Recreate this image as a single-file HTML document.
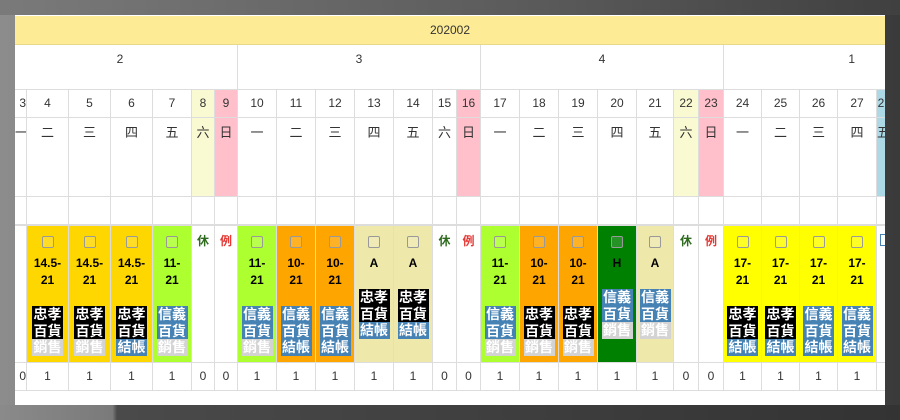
<!DOCTYPE html>
<html><head><meta charset="utf-8">
<style>
*{box-sizing:border-box;margin:0;padding:0}
body{width:900px;height:420px;overflow:hidden;position:relative;background:linear-gradient(90deg,#8c8c8c 0%,#6a6a6a 40%,#3a3a3a 100%);font-family:"Liberation Sans","Noto Sans CJK TC",sans-serif;color:#333}
.bot{position:absolute;left:0;top:405px;width:900px;height:15px;background:linear-gradient(90deg,#8a8a8a,#7a7a7a 12.5%,#4a4a4a 13%,#333 100%)}
.top{position:absolute;left:0;top:0;width:900px;height:15px;background:linear-gradient(90deg,#7a7a7a,#5a5a5a 60%,#404040)}
.wrap{position:absolute;left:15px;top:15px;width:870px;height:390px;background:#fff;overflow:hidden;border-top:1px solid #fff}
.row{display:grid;grid-template-columns:11px 42px 42px 42px 39px 23px 23px 39px 39px 39px 39px 39px 24px 24px 39px 39px 39px 39px 37px 25px 25px 38px 38px 38px 39px 9px}
.row>div{border-left:1px solid #ddd;border-bottom:1px solid #ddd;text-align:center;font-size:12px;overflow:hidden}
.row>div:first-child{border-left:none}
.hd{height:29px;background:#fdeb96;text-align:center;font-size:12px;line-height:29px;border-bottom:1px solid #e8d98a}
.dn{height:28px}.dn>div{line-height:27px}
.wd{height:79px}.wd>div{font-size:13px;padding-top:4px;font-family:"Noto Sans CJK TC",sans-serif}
.em{height:29px}.em>div{border-bottom:2px solid #ddd}
.cl{height:137px}
.cl>div{padding-top:10px;font-weight:bold;font-size:12px;line-height:17px;color:#000}
.ct{height:28px}.ct>div{line-height:27px}
.sa{background:#fafad2}.su{background:#ffc0cb}.lb{background:#add8e6}
.gold{background:#ffd700}.lime{background:#adff2f}.or{background:#ffa500}.kh{background:#eee8aa}.gr{background:#008000}.ye{background:#ff0}
.cb{width:12px;height:12px;border:1px solid #999;border-radius:2px;margin:0 auto 7px;background:rgba(255,255,255,.15)}
.tg{width:31px;margin:17px auto 0;font-size:14px;line-height:16.7px;color:#fff;font-family:"Noto Sans CJK TC",sans-serif;font-weight:bold}
.k{background:#000}.b{background:#4682b4}.g{background:#d3d3d3}
.x{padding-top:6px!important;font-family:"Noto Sans CJK TC",sans-serif!important;font-size:12px!important}
.xg{color:#2e6b1e!important}.xr{color:#e53935!important}
</style></head><body>
<div class="top"></div><div class="bot"></div>
<div class="wrap">
<div class="hd">202002</div>
<div style="display:grid;grid-template-columns:222px 243px 243px 162px;height:45px">
<div style="text-align:center;font-size:12px;padding-top:7px;padding-right:12px;border-bottom:1px solid #ddd">2</div>
<div style="text-align:center;font-size:12px;padding-top:7px;border-left:1px solid #ddd;border-bottom:1px solid #ddd">3</div>
<div style="text-align:center;font-size:12px;padding-top:7px;border-left:1px solid #ddd;border-bottom:1px solid #ddd">4</div>
<div style="text-align:right;padding-right:30px;font-size:12px;padding-top:7px;border-left:1px solid #ddd;border-bottom:1px solid #ddd">1</div>
</div>
<div class="row dn"><div style="text-align:right">3</div><div>4</div><div>5</div><div>6</div><div>7</div><div class="sa">8</div><div class="su">9</div><div>10</div><div>11</div><div>12</div><div>13</div><div>14</div><div>15</div><div class="su">16</div><div>17</div><div>18</div><div>19</div><div>20</div><div>21</div><div class="sa">22</div><div class="su">23</div><div>24</div><div>25</div><div>26</div><div>27</div><div class="lb">2</div></div>
<div class="row wd"><div style="text-align:right">一</div><div>二</div><div>三</div><div>四</div><div>五</div><div class="sa">六</div><div class="su">日</div><div>一</div><div>二</div><div>三</div><div>四</div><div>五</div><div>六</div><div class="su">日</div><div>一</div><div>二</div><div>三</div><div>四</div><div>五</div><div class="sa">六</div><div class="su">日</div><div>一</div><div>二</div><div>三</div><div>四</div><div class="lb">五</div></div>
<div class="row em"><div></div><div></div><div></div><div></div><div></div><div></div><div></div><div></div><div></div><div></div><div></div><div></div><div></div><div></div><div></div><div></div><div></div><div></div><div></div><div></div><div></div><div></div><div></div><div></div><div></div><div></div></div>
<div class="row cl">
<div></div>
<div class="gold"><div class="cb"></div>14.5-<br>21<div class="tg"><div class="k">忠孝<br>百貨</div><div class="g">銷售</div></div></div>
<div class="gold"><div class="cb"></div>14.5-<br>21<div class="tg"><div class="k">忠孝<br>百貨</div><div class="g">銷售</div></div></div>
<div class="gold"><div class="cb"></div>14.5-<br>21<div class="tg"><div class="k">忠孝<br>百貨</div><div class="b">結帳</div></div></div>
<div class="lime"><div class="cb"></div>11-<br>21<div class="tg"><div class="b">信義<br>百貨</div><div class="g">銷售</div></div></div>
<div class="x xg">休</div><div class="x xr">例</div>
<div class="lime"><div class="cb"></div>11-<br>21<div class="tg"><div class="b">信義<br>百貨</div><div class="g">銷售</div></div></div>
<div class="or"><div class="cb"></div>10-<br>21<div class="tg"><div class="b">信義<br>百貨</div><div class="b">結帳</div></div></div>
<div class="or"><div class="cb"></div>10-<br>21<div class="tg"><div class="b">信義<br>百貨</div><div class="b">結帳</div></div></div>
<div class="kh"><div class="cb"></div>A<div class="tg"><div class="k">忠孝<br>百貨</div><div class="b">結帳</div></div></div>
<div class="kh"><div class="cb"></div>A<div class="tg"><div class="k">忠孝<br>百貨</div><div class="b">結帳</div></div></div>
<div class="x xg">休</div><div class="x xr">例</div>
<div class="lime"><div class="cb"></div>11-<br>21<div class="tg"><div class="b">信義<br>百貨</div><div class="g">銷售</div></div></div>
<div class="or"><div class="cb"></div>10-<br>21<div class="tg"><div class="k">忠孝<br>百貨</div><div class="g">銷售</div></div></div>
<div class="or"><div class="cb"></div>10-<br>21<div class="tg"><div class="k">忠孝<br>百貨</div><div class="g">銷售</div></div></div>
<div class="gr"><div class="cb"></div>H<div class="tg"><div class="b">信義<br>百貨</div><div class="g">銷售</div></div></div>
<div class="kh"><div class="cb"></div>A<div class="tg"><div class="b">信義<br>百貨</div><div class="g">銷售</div></div></div>
<div class="x xg">休</div><div class="x xr">例</div>
<div class="ye"><div class="cb"></div>17-<br>21<div class="tg"><div class="k">忠孝<br>百貨</div><div class="b">結帳</div></div></div>
<div class="ye"><div class="cb"></div>17-<br>21<div class="tg"><div class="k">忠孝<br>百貨</div><div class="b">結帳</div></div></div>
<div class="ye"><div class="cb"></div>17-<br>21<div class="tg"><div class="b">信義<br>百貨</div><div class="b">結帳</div></div></div>
<div class="ye"><div class="cb"></div>17-<br>21<div class="tg"><div class="b">信義<br>百貨</div><div class="b">結帳</div></div></div>
<div style="padding-top:8px"><div style="width:6px;height:12px;border:1px solid #4682b4;margin-left:3px"></div></div>
</div>
<div class="row ct"><div style="text-align:right">0</div><div>1</div><div>1</div><div>1</div><div>1</div><div>0</div><div>0</div><div>1</div><div>1</div><div>1</div><div>1</div><div>1</div><div>0</div><div>0</div><div>1</div><div>1</div><div>1</div><div>1</div><div>1</div><div>0</div><div>0</div><div>1</div><div>1</div><div>1</div><div>1</div><div></div></div>
</div>
</body></html>
